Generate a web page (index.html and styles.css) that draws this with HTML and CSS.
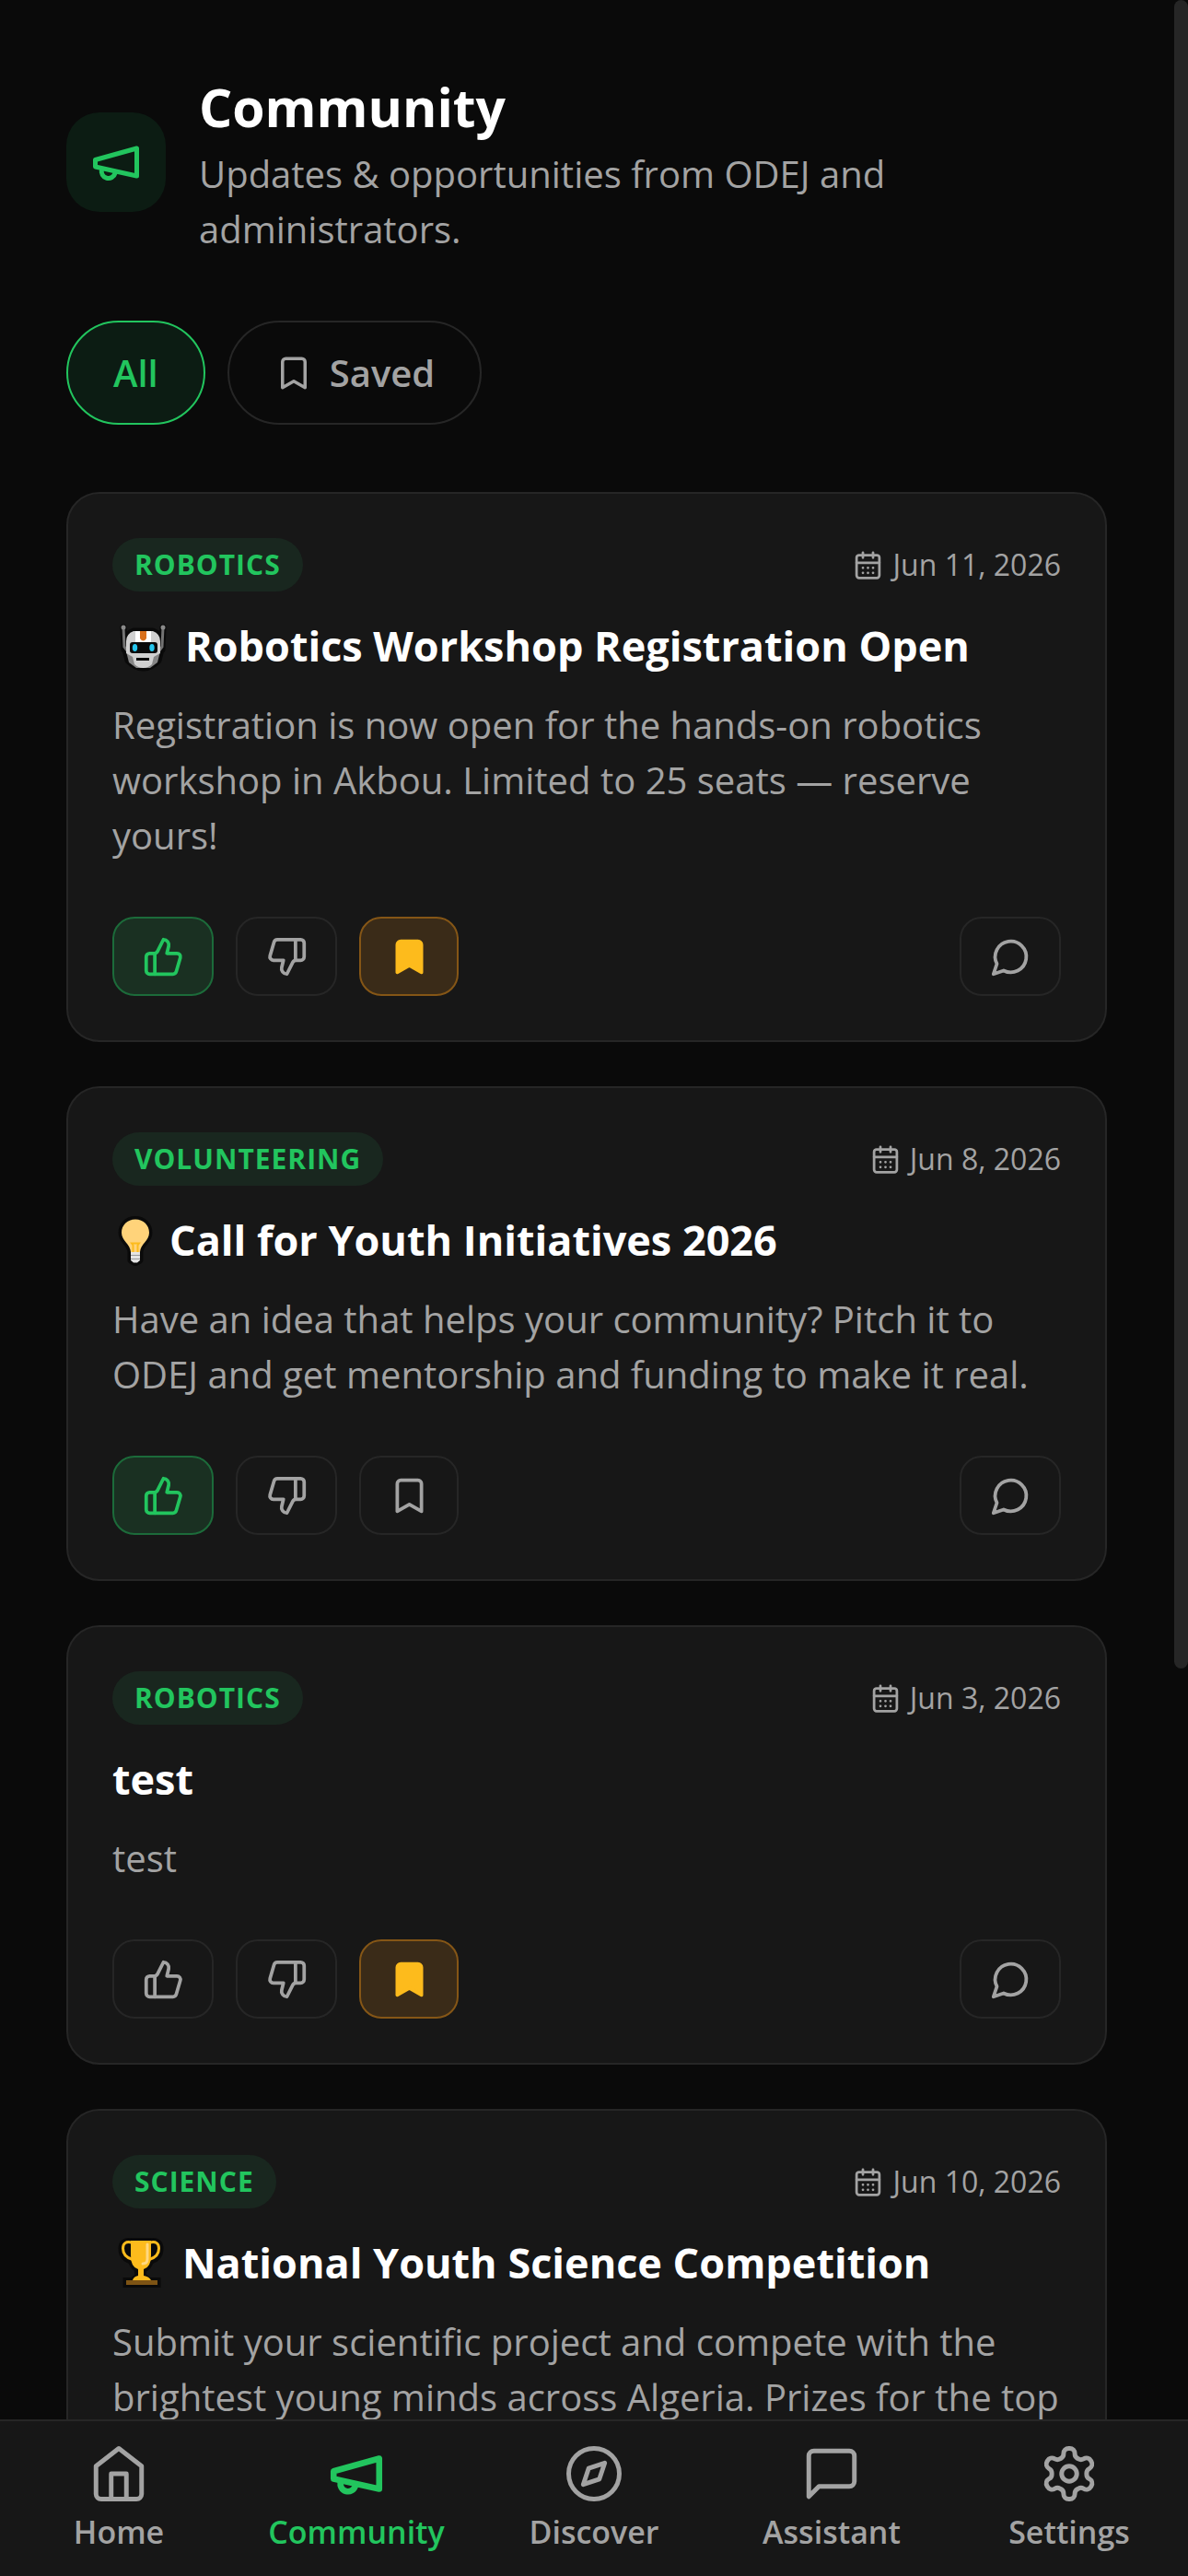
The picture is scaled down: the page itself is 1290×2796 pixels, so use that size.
FILE: index.html
```html
<!DOCTYPE html>
<html lang="en">

<head>
    <meta charset="UTF-8">
    <meta name="viewport" content="width=device-width, initial-scale=1">
    <title>Community</title>
    <link rel="stylesheet" href="styles.css">
</head>

<body>
    <!-- icon set -->
    <svg class="sprite" aria-hidden="true">
        <symbol id="megaphone" viewBox="0 0 24 24">
            <path d="m3 11 18-5v12L3 14v-3z" />
            <path d="M11.6 16.8a3 3 0 1 1-5.8-1.6" />
        </symbol>
        <symbol id="bookmark" viewBox="0 0 24 24">
            <path d="m19 21-7-4-7 4V5a2 2 0 0 1 2-2h10a2 2 0 0 1 2 2v16z" />
        </symbol>
        <symbol id="calendar" viewBox="0 0 24 24">
            <path d="M8 2v4M16 2v4M3 10h18" />
            <rect x="3" y="4" width="18" height="18" rx="2" />
            <path d="M8 14h.01M12 14h.01M16 14h.01M8 18h.01M12 18h.01M16 18h.01" />
        </symbol>
        <symbol id="like" viewBox="0 0 24 24">
            <path d="M7 10v12" />
            <path d="M15 5.88 14 10h5.83a2 2 0 0 1 1.92 2.56l-2.33 8A2 2 0 0 1 17.5 22H4a2 2 0 0 1-2-2v-8a2 2 0 0 1 2-2h2.76a2 2 0 0 0 1.79-1.11L12 2a3.13 3.13 0 0 1 3 3.88Z" />
        </symbol>
        <symbol id="dislike" viewBox="0 0 24 24">
            <path d="M17 14V2" />
            <path d="M9 18.12 10 14H4.17a2 2 0 0 1-1.92-2.56l2.33-8A2 2 0 0 1 6.5 2H20a2 2 0 0 1 2 2v8a2 2 0 0 1-2 2h-2.76a2 2 0 0 0-1.79 1.11L12 22a3.13 3.13 0 0 1-3-3.88Z" />
        </symbol>
        <symbol id="comment" viewBox="0 0 24 24">
            <path d="M7.9 20A9 9 0 1 0 4 16.1L2 22Z" />
        </symbol>
        <symbol id="home" viewBox="0 0 24 24">
            <path d="m3 9 9-7 9 7v11a2 2 0 0 1-2 2H5a2 2 0 0 1-2-2z" />
            <path d="M9 22V12h6v10" />
        </symbol>
        <symbol id="compass" viewBox="0 0 24 24">
            <circle cx="12" cy="12" r="10" />
            <path d="m16.24 7.76-2.12 6.36-6.36 2.12 2.12-6.36 6.36-2.12z" />
        </symbol>
        <symbol id="chat" viewBox="0 0 24 24">
            <path d="M21 15a2 2 0 0 1-2 2H7l-4 4V5a2 2 0 0 1 2-2h14a2 2 0 0 1 2 2z" />
        </symbol>
        <symbol id="gear" viewBox="0 0 24 24">
            <path d="M12.22 2h-.44a2 2 0 0 0-2 2v.18a2 2 0 0 1-1 1.73l-.43.25a2 2 0 0 1-2 0l-.15-.08a2 2 0 0 0-2.73.73l-.22.38a2 2 0 0 0 .73 2.73l.15.1a2 2 0 0 1 1 1.72v.51a2 2 0 0 1-1 1.74l-.15.09a2 2 0 0 0-.73 2.73l.22.38a2 2 0 0 0 2.73.73l.15-.08a2 2 0 0 1 2 0l.43.25a2 2 0 0 1 1 1.73V20a2 2 0 0 0 2 2h.44a2 2 0 0 0 2-2v-.18a2 2 0 0 1 1-1.73l.43-.25a2 2 0 0 1 2 0l.15.08a2 2 0 0 0 2.73-.73l.22-.39a2 2 0 0 0-.73-2.73l-.15-.08a2 2 0 0 1-1-1.74v-.5a2 2 0 0 1 1-1.74l.15-.09a2 2 0 0 0 .73-2.73l-.22-.38a2 2 0 0 0-2.73-.73l-.15.08a2 2 0 0 1-2 0l-.43-.25a2 2 0 0 1-1-1.73V4a2 2 0 0 0-2-2z" />
            <circle cx="12" cy="12" r="3" />
        </symbol>
    </svg>

    <div class="app">
        <main class="content">
            <header class="header">
                <div class="header-icon">
                    <svg class="icon"><use href="#megaphone" /></svg>
                </div>
                <div class="header-text">
                    <h1>Community</h1>
                    <p>Updates &amp; opportunities from ODEJ and administrators.</p>
                </div>
            </header>

            <div class="filters">
                <button type="button" class="filter active">All</button>
                <button type="button" class="filter">
                    <svg class="icon"><use href="#bookmark" /></svg>
                    Saved
                </button>
            </div>

            <article class="card">
                <div class="card-top">
                    <span class="badge">Robotics</span>
                    <time class="date" datetime="2026-06-11"><svg class="icon"><use href="#calendar" /></svg>Jun 11, 2026</time>
                </div>
                <h2>
                    <!-- robot -->
                    <svg class="emoji" width="65" height="72" viewBox="2 -6 65 72">
                        <g fill="#0a0a0a" stroke="#0a0a0a" stroke-width="7" stroke-linejoin="round" stroke-linecap="round">
                            <path d="M14 10l1 24M57 10l-1 24" />
                            <path d="M25 14h21q8 3 8 11v13l-2 8q-8 8-16.500 8t-16.500-8l-2-8V25q0-8 8-11z" />
                        </g>
                        <path d="M14 10l1 21 3 4M57 10l-1 21-3 4" fill="none" stroke="#737373" stroke-width="3" />
                        <circle cx="14" cy="10" r="2.500" fill="#8a8a8a" />
                        <circle cx="57" cy="10" r="2.500" fill="#8a8a8a" />
                        <path d="M17 36l3 12 8 6h15l8-6 3-12z" fill="#858585" />
                        <path d="M25 14h21q8 3 8 11v13l-7 4-2 8q-4 4-9.500 4t-9.500-4l-2-8-7-4V25q0-8 8-11z" fill="#d0d0d0" />
                        <path d="M27 14h17v12H27z" fill="#fff" />
                        <path d="M32 14h7v8q-3.500 5-7 0z" fill="#d8701c" />
                        <rect x="21" y="26" width="30" height="12" rx="3" fill="#0a0a0a" />
                        <ellipse cx="26.500" cy="32" rx="2.700" ry="4" fill="#26c6ee" />
                        <ellipse cx="45" cy="32" rx="2.700" ry="4" fill="#26c6ee" />
                        <path d="M28 43h14v3H28z" fill="#0a0a0a" />
                    </svg>
                    Robotics Workshop Registration Open
                </h2>
                <p class="card-text">Registration is now open for the hands-on robotics workshop in Akbou. Limited to 25 seats — reserve yours!</p>
                <div class="actions">
                    <button type="button" class="action liked" aria-label="Like"><svg class="icon"><use href="#like" /></svg></button>
                    <button type="button" class="action" aria-label="Dislike"><svg class="icon"><use href="#dislike" /></svg></button>
                    <button type="button" class="action save saved" aria-label="Save"><svg class="icon"><use href="#bookmark" /></svg></button>
                    <button type="button" class="action comments" aria-label="Comments"><svg class="icon"><use href="#comment" /></svg></button>
                </div>
            </article>

            <article class="card">
                <div class="card-top">
                    <span class="badge">Volunteering</span>
                    <time class="date" datetime="2026-06-08"><svg class="icon"><use href="#calendar" /></svg>Jun 8, 2026</time>
                </div>
                <h2>
                    <!-- light bulb -->
                    <svg class="emoji" width="48" height="72" viewBox="2 -1 48 72">
                        <path d="M27 12.500c-9 0-15 6.500-15 14.500 0 9 9.500 12 10 21v9l5 2.500 5-2.500v-9c.5-9 10-12 10-21 0-8-6-14.500-15-14.500z" fill="#0a0a0a" stroke="#0a0a0a" stroke-width="7" stroke-linejoin="round" />
                        <path d="M27 12.500c-9 0-15 6.500-15 14.500 0 9 9.500 12 10 21h10c.5-9 10-12 10-21 0-8-6-14.500-15-14.500z" fill="#ffd37a" />
                        <path d="M24.500 48v-7.500l-1.500-2h8l-1.500 2V48" fill="none" stroke="#fdbb1c" stroke-width="2" />
                        <path d="M22 48h10v9l-3 2.500h-4L22 57z" fill="#e4e4e4" />
                        <path d="M22 51.500h10M22 55.500h10" stroke="#9a9a9a" stroke-width="1" />
                    </svg>
                    Call for Youth Initiatives 2026
                </h2>
                <p class="card-text">Have an idea that helps your community? Pitch it to ODEJ and get mentorship and funding to make it real.</p>
                <div class="actions">
                    <button type="button" class="action liked" aria-label="Like"><svg class="icon"><use href="#like" /></svg></button>
                    <button type="button" class="action" aria-label="Dislike"><svg class="icon"><use href="#dislike" /></svg></button>
                    <button type="button" class="action save" aria-label="Save"><svg class="icon"><use href="#bookmark" /></svg></button>
                    <button type="button" class="action comments" aria-label="Comments"><svg class="icon"><use href="#comment" /></svg></button>
                </div>
            </article>

            <article class="card">
                <div class="card-top">
                    <span class="badge">Robotics</span>
                    <time class="date" datetime="2026-06-03"><svg class="icon"><use href="#calendar" /></svg>Jun 3, 2026</time>
                </div>
                <h2>test</h2>
                <p class="card-text">test</p>
                <div class="actions">
                    <button type="button" class="action" aria-label="Like"><svg class="icon"><use href="#like" /></svg></button>
                    <button type="button" class="action" aria-label="Dislike"><svg class="icon"><use href="#dislike" /></svg></button>
                    <button type="button" class="action save saved" aria-label="Save"><svg class="icon"><use href="#bookmark" /></svg></button>
                    <button type="button" class="action comments" aria-label="Comments"><svg class="icon"><use href="#comment" /></svg></button>
                </div>
            </article>

            <article class="card">
                <div class="card-top">
                    <span class="badge">Science</span>
                    <time class="date" datetime="2026-06-10"><svg class="icon"><use href="#calendar" /></svg>Jun 10, 2026</time>
                </div>
                <h2>
                    <!-- trophy -->
                    <svg class="emoji" width="62" height="72" viewBox="2 -3 62 72">
                        <g fill="#0a0a0a" stroke="#0a0a0a" stroke-width="7">
                            <path d="M22 9.500h22v14q0 14-8 16l-1 8 7 5h9v4H17v-4h7l6-5-1-8q-7-3-7-16z" />
                            <path d="M22 10.500q-9-1-9 7 0 10 11 13M44 10.500q9-1 9 7 0 10-11 13" stroke-width="9" />
                        </g>
                        <path d="M23 11q-9.500-2-9.500 6.500 0 9 10.500 12M43 11q9.500-2 9.500 6.500 0 9-10.500 12" fill="none" stroke="#fdbb1c" stroke-width="3" />
                        <path d="M22 9h22v16q0 13-8 15v7q6 1 8 5H24q1-4 6-5v-7q-8-2-8-15z" fill="#fdbb1c" />
                        <path d="M40 13v16q0 5-5 5" fill="none" stroke="#ffd87f" stroke-width="3" stroke-linecap="round" />
                        <path d="M17 52h34v5H17z" fill="#7d5314" />
                    </svg>
                    National Youth Science Competition
                </h2>
                <p class="card-text">Submit your scientific project and compete with the brightest young minds across Algeria. Prizes for the top</p>
            </article>
        </main>

        <div class="scroll-thumb"></div>

        <nav class="tabs">
            <a href="#" class="tab"><svg class="icon"><use href="#home" /></svg>Home</a>
            <a href="#" class="tab active"><svg class="icon"><use href="#megaphone" /></svg>Community</a>
            <a href="#" class="tab"><svg class="icon"><use href="#compass" /></svg>Discover</a>
            <a href="#" class="tab"><svg class="icon"><use href="#chat" /></svg>Assistant</a>
            <a href="#" class="tab"><svg class="icon"><use href="#gear" /></svg>Settings</a>
        </nav>
    </div>
</body>

</html>
```
FILE: styles.css
```css
* {
    box-sizing: border-box;
    padding: 0;
    margin: 0;
}

body {
    background: #0a0a0a;
    color: #a3a3a3;
    font-family: "Segoe UI", "Open Sans", "Noto Sans", sans-serif;
    font-size: 40px;
    line-height: 60px;
}

button {
    font: inherit;
    color: inherit;
    background: none;
    cursor: pointer;
}

.sprite {
    position: absolute;
    width: 0;
    height: 0;
}

.icon {
    flex: none;
    fill: none;
    stroke: currentColor;
    stroke-width: 2;
    stroke-linecap: round;
    stroke-linejoin: round;
}

.app {
    position: relative;
    display: flex;
    flex-direction: column;
    height: 100vh;
}

.content {
    flex: 1;
    min-height: 0;
    padding: 72px 88px 0 72px;
    overflow: hidden;
}

/* header */
.header {
    display: flex;
    align-items: center;
    gap: 36px;
    margin-bottom: 69px;
}

.header-icon {
    display: flex;
    align-items: center;
    justify-content: center;
    width: 108px;
    height: 108px;
    border-radius: 36px;
    background: #0c1c13;
    color: #22c55e;
}

.header-icon .icon {
    width: 60px;
    height: 60px;
}

.header-text {
    flex: 1;
    padding-top: 2px;
}

.header h1 {
    font-size: 57px;
    line-height: 85px;
    color: #fff;
}

/* filters */
.filters {
    display: flex;
    gap: 24px;
    margin-bottom: 73px;
}

.filter {
    display: flex;
    align-items: center;
    gap: 18px;
    height: 113px;
    padding: 0 49px;
    border: 2px solid #262626;
    border-radius: 57px;
    font-weight: 600;
}

.filter.active {
    border-color: #22c55e;
    background: #0c1c13;
    color: #22c55e;
}

.filter .icon {
    width: 42px;
    height: 42px;
}

/* cards */
.card {
    margin-bottom: 48px;
    padding: 48px;
    border: 2px solid #262626;
    border-radius: 36px;
    background: #171717;
}

.card-top {
    display: flex;
    align-items: center;
    justify-content: space-between;
    margin-bottom: 23px;
}

.badge {
    padding: 0 24px;
    border-radius: 29px;
    background: #19271f;
    color: #22c55e;
    font-size: 30px;
    font-weight: 700;
    line-height: 58px;
    letter-spacing: 1px;
    text-transform: uppercase;
}

.date {
    display: flex;
    align-items: center;
    gap: 10px;
    font-size: 32px;
    line-height: 58px;
}

.date .icon {
    width: 33px;
    height: 33px;
}

.card h2 {
    display: flex;
    align-items: center;
    gap: 14px;
    margin-bottom: 20px;
    font-size: 45px;
    line-height: 72px;
    color: #fff;
}

.emoji {
    flex: none;
}

.actions {
    display: flex;
    gap: 24px;
    margin-top: 58px;
}

.action {
    display: flex;
    align-items: center;
    justify-content: center;
    width: 110px;
    height: 86px;
    border: 2px solid #262626;
    border-radius: 24px;
}

.action .icon {
    width: 45px;
    height: 45px;
}

.action.save {
    width: 108px;
}

.action.liked {
    border-color: #1c6b3a;
    background: #1a3022;
    color: #22c55e;
}

.action.saved {
    border-color: #855616;
    background: #3a2b18;
    color: #fdbb1c;
}

.action.saved .icon {
    fill: currentColor;
}

.action.comments {
    margin-left: auto;
}

.scroll-thumb {
    position: absolute;
    top: 0;
    right: 0;
    width: 15px;
    height: 1811px;
    border-radius: 8px;
    background: #262626;
}

/* bottom tabs */
.tabs {
    position: relative;
    display: grid;
    grid-template-columns: repeat(5, 1fr);
    padding: 24px 0;
    border-top: 2px solid #262626;
    background: #171717;
}

.tab {
    display: flex;
    flex-direction: column;
    align-items: center;
    gap: 6px;
    font-size: 34px;
    font-weight: 600;
    line-height: 48px;
    color: inherit;
    text-decoration: none;
}

.tab .icon {
    width: 66px;
    height: 66px;
    stroke-width: 1.8;
}

.tab.active {
    color: #22c55e;
}

.tab.active .icon {
    stroke-width: 2.4;
}
```
